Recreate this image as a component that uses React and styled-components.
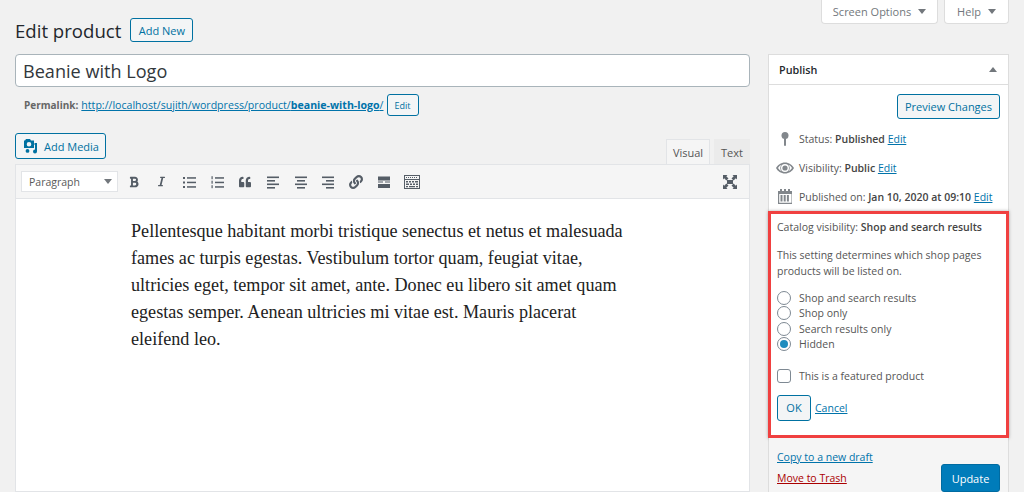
import styled, { createGlobalStyle } from "styled-components";
import { FaBold, FaItalic, FaQuoteLeft, FaLink } from "react-icons/fa";

const GlobalStyle = createGlobalStyle`
  html, body {
    margin: 0;
    height: 492px;
    overflow: hidden;
    background: #f1f1f1;
    font-family: "Open Sans", "Liberation Sans", sans-serif;
    font-size: 11px;
    color: #444;
  }
  * { box-sizing: border-box; }
`;

const Page = styled.div`
  width: 1024px;
  height: 492px;
  overflow: hidden;
  position: relative;
`;

const ScreenTabs = styled.div`
  display: flex;
  justify-content: flex-end;
  gap: 6px;
  height: 24px;
  padding-right: 15px;
`;

const ScreenTab = styled.div`
  width: ${(p) => p.$w}px;
  height: 24px;
  background: #fff;
  border: 1px solid #ddd;
  border-top: 0;
  border-radius: 0 0 4px 4px;
  display: flex;
  align-items: center;
  justify-content: center;
  gap: 7px;
  font-size: 11px;
  color: #72777c;
`;

const Caret = styled.i`
  width: 0;
  height: 0;
  border-left: 4px solid transparent;
  border-right: 4px solid transparent;
  border-${(p) => (p.$up ? "bottom" : "top")}: 5px solid #72777c;
`;

const Columns = styled.div`
  display: flex;
  align-items: flex-start;
  gap: 18px;
  padding: 0 15px;
`;

const Main = styled.div`
  width: 735px;
  flex: none;
`;

const HeadingRow = styled.div`
  display: flex;
  align-items: center;
  gap: 9px;
  height: 30px;
  margin-top: -10px;
  padding-top: 2px;
`;

const Heading = styled.h1`
  margin: 0;
  font-size: 18.6px;
  font-weight: 400;
  color: #23282d;
`;

const OutlineButton = styled.button`
  font: inherit;
  font-size: ${(p) => p.$size || 11}px;
  width: ${(p) => p.$w}px;
  height: ${(p) => p.$h}px;
  padding: 0;
  color: #0071a1;
  background: #f3f5f6;
  border: 1px solid #0071a1;
  border-radius: 3px;
  display: inline-flex;
  align-items: center;
  justify-content: center;
  gap: 6px;
  flex: none;
`;

const TitleInput = styled.div`
  margin-top: 10px;
  height: 33px;
  padding: 0 7px;
  display: flex;
  align-items: center;
  background: #fff;
  border: 1px solid #a9b4ba;
  border-radius: 4px;
  font-size: 18.1px;
  color: #32373c;
`;

const PermalinkRow = styled.div`
  display: flex;
  align-items: center;
  height: 22px;
  margin-top: 7px;
  padding-left: 9px;
  font-size: 10.6px;
  color: #666;
  gap: 3px;
`;

const PermalinkLabel = styled.b`
  font-size: 10px;
`;

const Link = styled.a`
  color: ${(p) => p.$color || "#0073aa"};
  text-decoration: underline;
`;

const MediaBar = styled.div`
  display: flex;
  justify-content: space-between;
  align-items: flex-end;
  height: 48px;
`;

const MediaButtonWrap = styled.div`
  align-self: flex-start;
  margin-top: 17px;
`;

const EditorTabs = styled.div`
  display: flex;
  gap: 4px;
`;

const EditorTab = styled.div`
  width: ${(p) => p.$w}px;
  height: 25px;
  display: flex;
  align-items: center;
  justify-content: center;
  font-size: 11px;
  color: #555;
  background: ${(p) => (p.$active ? "#f5f5f5" : "#ebebeb")};
  border: 1px solid ${(p) => (p.$active ? "#e2e4e7" : "#ebebeb")};
  border-bottom: 0;
`;

const Toolbar = styled.div`
  height: 35px;
  display: flex;
  align-items: center;
  padding: 0 5px;
  background: #f5f5f5;
  border: 1px solid #e2e4e7;
`;

const FormatSelect = styled.div`
  width: 97px;
  height: 21px;
  flex: none;
  display: flex;
  align-items: center;
  justify-content: space-between;
  padding: 0 5px 0 7px;
  background: #fff;
  border: 1px solid #e2e4e7;
  font-size: 10.5px;
  color: #595959;
`;

const ToolIcons = styled.div`
  display: flex;
  align-items: center;
  flex: 1;
  margin-left: 2px;
`;

const ToolIcon = styled.span`
  width: 27.8px;
  height: 20px;
  display: flex;
  align-items: center;
  justify-content: center;
  color: #555d66;
  flex: none;
`;

const FullscreenIcon = styled(ToolIcon)`
  margin-left: auto;
`;

const Content = styled.div`
  height: 293px;
  padding: 19px 120px 0 115px;
  background: #fff;
  border: 1px solid #e2e4e7;
  border-top: 0;
  font-family: "Liberation Serif", serif;
  font-size: 18.15px;
  line-height: 27px;
  color: #222;
`;

const Side = styled.div`
  width: 241px;
  flex: none;
  margin-top: 30px;
  background: #fff;
  border: 1px solid #ddd;
`;

const BoxHeader = styled.div`
  height: 30px;
  display: flex;
  align-items: center;
  justify-content: space-between;
  padding: 0 11px 0 10px;
  border-bottom: 1px solid #ddd;
  font-size: 10.8px;
  font-weight: 600;
  color: #23282d;
`;

const PreviewRow = styled.div`
  display: flex;
  justify-content: flex-end;
  padding: 9px 8px 0 0;
`;

const MetaList = styled.div`
  display: flex;
  flex-direction: column;
  margin-top: 5px;
  padding-left: 6px;
`;

const MetaRow = styled.div`
  height: 29px;
  display: flex;
  align-items: center;
  gap: 4px;
  font-size: 10.5px;
  color: #555;
  b { font-weight: 600; color: #444; }
`;

const MetaIcon = styled.span`
  width: 20px;
  display: flex;
  justify-content: center;
  color: #82878c;
  flex: none;
`;

const CatalogBox = styled.div`
  margin: 0 -1px;
  height: 227px;
  padding: 5px 8px 0 6px;
  background: #fff;
  border: 3px solid #f04040;
  box-shadow: 0 0 3px rgba(90, 90, 90, 0.5);
  font-size: 10.5px;
  color: #555;
  b { font-weight: 600; color: #444; }
`;

const CatalogLine = styled.div`
  line-height: 16px;
`;

const CatalogText = styled.p`
  margin: 12px 0 0;
  line-height: 16px;
`;

const RadioList = styled.div`
  margin-top: 11px;
  display: flex;
  flex-direction: column;
`;

const OptionRow = styled.label`
  height: 15.5px;
  display: flex;
  align-items: center;
  gap: 8px;
`;

const Radio = styled.span`
  width: 14px;
  height: 14px;
  border: 1px solid #7e8993;
  border-radius: 50%;
  background: #fff;
  flex: none;
  display: flex;
  align-items: center;
  justify-content: center;
  &::after {
    content: "";
    display: ${(p) => (p.$on ? "block" : "none")};
    width: 8px;
    height: 8px;
    border-radius: 50%;
    background: #1e8cbe;
  }
`;

const Checkbox = styled.span`
  width: 14px;
  height: 14px;
  border: 1px solid #7e8993;
  border-radius: 3px;
  background: #fff;
  flex: none;
`;

const FeatureRow = styled.div`
  margin-top: 16px;
`;

const ActionRow = styled.div`
  display: flex;
  align-items: center;
  gap: 4px;
  margin-top: 11px;
`;

const Footer = styled.div`
  display: flex;
  justify-content: space-between;
  padding: 12px 8px 0;
  background: #f5f5f5;
  height: 70px;
`;

const FooterLinks = styled.div`
  display: flex;
  flex-direction: column;
  gap: 7px;
  font-size: 10.5px;
  line-height: 14px;
`;

const UpdateButton = styled.button`
  font: inherit;
  font-size: 11px;
  width: 59px;
  height: 28px;
  margin-top: 14px;
  padding: 0;
  color: #fff;
  background: #007cba;
  border: 1px solid #006ba1;
  border-radius: 3px;
`;

const Glyph = ({ w = 16, h = 16, children, ...rest }) => (
  <svg width={w} height={h} viewBox={`0 0 ${w} ${h}`} fill="currentColor" {...rest}>
    {children}
  </svg>
);

const Lines = ({ rows }) => (
  <Glyph>
    {rows.map(([x, y, w], i) => (
      <rect key={i} x={x} y={y} width={w} height="1.6" />
    ))}
  </Glyph>
);

const BulletIcon = () => (
  <Glyph>
    {[3, 7.5, 12].map((y) => (
      <g key={y}>
        <rect x="2" y={y} width="2" height="2" />
        <rect x="6" y={y + 0.2} width="9" height="1.5" />
      </g>
    ))}
  </Glyph>
);

const NumberIcon = () => (
  <Glyph>
    {[3, 7.5, 12].map((y) => (
      <g key={y}>
        <rect x="2.5" y={y - 0.8} width="1.2" height="3" />
        <rect x="6" y={y + 0.2} width="9" height="1.5" />
      </g>
    ))}
  </Glyph>
);

const ReadMoreIcon = () => (
  <Glyph w={14} h={14}>
    <rect x="1" y="1.5" width="12" height="4" />
    <rect x="1" y="6.5" width="5" height="1" />
    <rect x="8" y="6.5" width="5" height="1" />
    <rect x="1" y="9" width="12" height="4" />
  </Glyph>
);

const KitchenSinkIcon = () => (
  <Glyph w={16} h={14}>
    <path d="M0 0h16v14H0zM1 1v3h14V1zm0 4v8h14V5z" fillRule="evenodd" />
    <path d="M2 6h2v1.5H2zm3 0h2v1.5H5zm3 0h2v1.5H8zm3 0h3v1.5h-3zM2 8.5h3V10H2zm4 0h2V10H6zm3 0h2V10H9zm3 0h2V10h-2zM2 11h2v1.2H2zm3 0h6v1.2H5zm7 0h2v1.2h-2zM2 2h1v1H2zm2 0h1v1H4zm2 0h1v1H6zm2 0h1v1H8zm2 0h1v1h-1zm2 0h1v1h-1z" />
  </Glyph>
);

const FullscreenGlyph = () => (
  <Glyph>
    <path d="M1 1h4.5L4.3 2.2 6.5 4.4 4.4 6.5 2.2 4.3 1 5.5zM15 1v4.5l-1.2-1.2-2.2 2.2-2.1-2.1 2.2-2.2L10.5 1zM1 15v-4.5l1.2 1.2 2.2-2.2 2.1 2.1-2.2 2.2L5.5 15zM15 15h-4.5l1.2-1.2-2.2-2.2 2.1-2.1 2.2 2.2 1.2-1.2z" />
    <rect x="5" y="6" width="6" height="4" />
  </Glyph>
);

const MediaIcon = () => (
  <Glyph w={16} h={16}>
    <path d="M4 1h4l1 1.5h3v7.5H2V2.500h1zM7 4a2.300 2.300 0 1 0 0 4.600A2.300 2.300 0 0 0 7 4z" fillRule="evenodd" />
    <path d="M12.500 5H15v8.500a2 2 0 1 1-2-2V7h-.5zM5.500 11a1.900 1.900 0 1 1 0 3.800 1.900 1.900 0 0 1 0-3.800z" />
  </Glyph>
);

const PinIcon = () => (
  <Glyph w={8} h={14}>
    <circle cx="4" cy="3.500" r="3.500" />
    <rect x="3" y="6" width="2" height="8" rx="1" />
  </Glyph>
);

const EyeIcon = () => (
  <Glyph w={18} h={12}>
    <path d="M9 0.500C13 0.500 16.500 3 18 6c-1.500 3-5 5.500-9 5.500S1.500 9 0 6C1.500 3 5 0.500 9 0.500zM9 2a4 4 0 1 0 0 8 4 4 0 0 0 0-8zM2 6c1 1.500 2.200 2.600 3.500 3.300A5.500 5.500 0 0 1 5.500 2.700 8 8 0 0 0 2 6zm14 0a8 8 0 0 0-3.500-3.300 5.500 5.500 0 0 1 0 6.600C13.800 8.600 15 7.500 16 6z" fillRule="evenodd" />
    <circle cx="9" cy="6" r="2.600" />
  </Glyph>
);

const CalendarIcon = () => (
  <Glyph w={15} h={15}>
    <path d="M0 2h2V0h2v2h2V0h2v2h2V0h2v2h2v13H0zM1.200 5v8.800h12.300V5z" fillRule="evenodd" />
    <path d="M2.500 6h2v6.500h-2zm3.200 0h2v6.500h-2zm3.200 0h2v6.500h-2z" />
  </Glyph>
);

const radios = [
  { label: "Shop and search results" },
  { label: "Shop only" },
  { label: "Search results only" },
  { label: "Hidden", on: true },
];

const toolIcons = [
  <FaBold key="b" size={12} />,
  <FaItalic key="i" size={11} />,
  <BulletIcon key="ul" />,
  <NumberIcon key="ol" />,
  <FaQuoteLeft key="q" size={12} />,
  <Lines key="l" rows={[[2, 2.5, 12], [2, 6, 8], [2, 9.5, 12], [2, 13, 8]]} />,
  <Lines key="c" rows={[[2, 2.5, 12], [4, 6, 8], [2, 9.5, 12], [4, 13, 8]]} />,
  <Lines key="r" rows={[[2, 2.5, 12], [6, 6, 8], [2, 9.5, 12], [6, 13, 8]]} />,
  <FaLink key="a" size={14} />,
  <ReadMoreIcon key="m" />,
  <KitchenSinkIcon key="k" />,
];

export default function App() {
  return (
    <Page>
      <GlobalStyle />
      <ScreenTabs>
        <ScreenTab $w={117}>Screen Options <Caret /></ScreenTab>
        <ScreenTab $w={65}>Help <Caret /></ScreenTab>
      </ScreenTabs>
      <Columns>
        <Main>
          <HeadingRow>
            <Heading>Edit product</Heading>
            <OutlineButton $w={63} $h={24}>Add New</OutlineButton>
          </HeadingRow>
          <TitleInput>Beanie with Logo</TitleInput>
          <PermalinkRow>
            <PermalinkLabel>Permalink:</PermalinkLabel>
            <Link>http://localhost/sujith/wordpress/product/<b>beanie-with-logo</b>/</Link>
            <OutlineButton $w={32} $h={22} $size={9}>Edit</OutlineButton>
          </PermalinkRow>
          <MediaBar>
            <MediaButtonWrap>
              <OutlineButton $w={91} $h={26}><MediaIcon /> Add Media</OutlineButton>
            </MediaButtonWrap>
            <EditorTabs>
              <EditorTab $w={44} $active>Visual</EditorTab>
              <EditorTab $w={36}>Text</EditorTab>
            </EditorTabs>
          </MediaBar>
          <Toolbar>
            <FormatSelect>Paragraph <Caret /></FormatSelect>
            <ToolIcons>
              {toolIcons.map((icon) => (
                <ToolIcon key={icon.key}>{icon}</ToolIcon>
              ))}
              <FullscreenIcon><FullscreenGlyph /></FullscreenIcon>
            </ToolIcons>
          </Toolbar>
          <Content>
            Pellentesque habitant morbi tristique senectus et netus et malesuada fames ac turpis egestas. Vestibulum tortor quam, feugiat vitae, ultricies eget, tempor sit amet, ante. Donec eu libero sit amet quam egestas semper. Aenean ultricies mi vitae est. Mauris placerat eleifend leo.
          </Content>
        </Main>
        <Side>
          <BoxHeader>Publish <Caret $up /></BoxHeader>
          <PreviewRow>
            <OutlineButton $w={103} $h={25}>Preview Changes</OutlineButton>
          </PreviewRow>
          <MetaList>
            <MetaRow><MetaIcon><PinIcon /></MetaIcon><span>Status: <b>Published</b> <Link>Edit</Link></span></MetaRow>
            <MetaRow><MetaIcon><EyeIcon /></MetaIcon><span>Visibility: <b>Public</b> <Link>Edit</Link></span></MetaRow>
            <MetaRow><MetaIcon><CalendarIcon /></MetaIcon><span>Published on: <b>Jan 10, 2020 at 09:10</b> <Link>Edit</Link></span></MetaRow>
          </MetaList>
          <CatalogBox>
            <CatalogLine>Catalog visibility: <b>Shop and search results</b></CatalogLine>
            <CatalogText>This setting determines which shop pages products will be listed on.</CatalogText>
            <RadioList>
              {radios.map((r) => (
                <OptionRow key={r.label}><Radio $on={r.on} />{r.label}</OptionRow>
              ))}
            </RadioList>
            <FeatureRow>
              <OptionRow><Checkbox />This is a featured product</OptionRow>
            </FeatureRow>
            <ActionRow>
              <OutlineButton $w={34} $h={26}>OK</OutlineButton>
              <Link>Cancel</Link>
            </ActionRow>
          </CatalogBox>
          <Footer>
            <FooterLinks>
              <Link>Copy to a new draft</Link>
              <Link $color="#a00">Move to Trash</Link>
            </FooterLinks>
            <UpdateButton>Update</UpdateButton>
          </Footer>
        </Side>
      </Columns>
    </Page>
  );
}
